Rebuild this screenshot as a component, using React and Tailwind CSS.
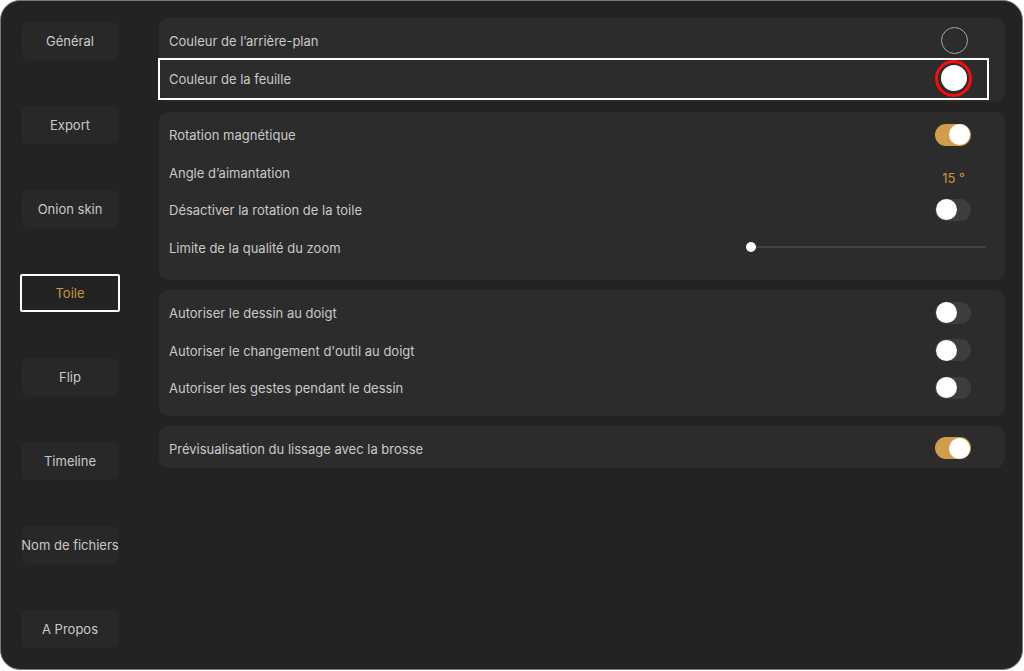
import React from 'react';

const font = { fontFamily: 'Inter, "Noto Sans", sans-serif' };

const navItems = ['Général', 'Export', 'Onion skin', 'Toile', 'Flip', 'Timeline', 'Nom de fichiers', 'A Propos'];

const Toggle = ({ on }) => (
  <div
    className={`w-[36px] h-[22px] rounded-full flex items-center px-[1px] ${
      on ? 'bg-[#d19d4a] justify-end' : 'bg-[#3d3d3f] justify-start'
    }`}
  >
    <div className="w-[21px] h-[21px] rounded-full bg-white" />
  </div>
);

const Row = ({ label, children }) => (
  <div className="h-[37.5px] flex items-center justify-between pl-[10px] pr-[34px]">
    <span className="text-[13px] text-[#c9c9c9] mt-[2px]">{label}</span>
    {children}
  </div>
);

const App = () => {
  return (
    <div className="w-[1024px] h-[671px] bg-white" style={font}>
      <div className="w-[1023px] h-[670px] bg-[#232323] rounded-[20px] border border-[#7a7a7a] flex overflow-hidden">
        {/* Sidebar */}
        <div className="w-[158px] shrink-0 flex flex-col pt-[21px] pl-[20px] gap-[46px]">
          {navItems.map((item) => (
            <div
              key={item}
              className={`h-[38px] flex items-center justify-center text-[13px] pt-[2px] ${
                item === 'Toile'
                  ? 'w-[100px] -ml-[1px] border-2 border-white rounded-[2px] text-[#c8963e] bg-[#232323]'
                  : 'w-[98px] rounded-[6px] bg-[#282828] text-[#c9c9c9]'
              }`}
            >
              {item}
            </div>
          ))}
        </div>

        {/* Content */}
        <div className="flex-1 flex flex-col gap-[10px] pt-[17px] pr-[17px]">
          <div className="bg-[#2c2c2c] rounded-[10px] pt-[4px] pb-[5px]">
            <Row label="Couleur de l’arrière-plan">
              <div className="w-[27px] h-[27px] rounded-full border-[1.5px] border-[#a8a8a8] mr-[3px]" />
            </Row>
            <div className="relative">
              <Row label="Couleur de la feuille">
                <div className="w-[37px] h-[37px] rounded-full border-[3px] border-[#ff0a0a] flex items-center justify-center mr-[-1px]">
                  <div className="w-[26px] h-[26px] rounded-full bg-white" />
                </div>
              </Row>
              <div className="absolute left-[-1px] right-[16px] top-[-2px] bottom-[-3px] border-2 border-white pointer-events-none" />
            </div>
          </div>

          <div className="bg-[#2c2c2c] rounded-[10px] pt-[4px] pb-[14px]">
            <Row label="Rotation magnétique">
              <Toggle on />
            </Row>
            <Row label="Angle d’aimantation">
              <span className="text-[13px] text-[#c8963e] mt-[12px] mr-[6px]">15 °</span>
            </Row>
            <Row label="Désactiver la rotation de la toile">
              <Toggle />
            </Row>
            <div className="h-[37.5px] flex items-center justify-between pl-[10px] pr-[19px]">
              <span className="text-[13px] text-[#c9c9c9] mt-[2px]">Limite de la qualité du zoom</span>
              <div className="w-[240px] relative flex items-center">
                <div className="w-full h-[2px] bg-[#444] rounded-full" />
                <div className="absolute left-0 w-[10px] h-[10px] rounded-full bg-white" />
              </div>
            </div>
          </div>

          <div className="bg-[#2c2c2c] rounded-[10px] pt-[4px] pb-[9px]">
            <Row label="Autoriser le dessin au doigt">
              <Toggle />
            </Row>
            <Row label="Autoriser le changement d'outil au doigt">
              <Toggle />
            </Row>
            <Row label="Autoriser les gestes pendant le dessin">
              <Toggle />
            </Row>
          </div>

          <div className="bg-[#2c2c2c] rounded-[10px] pt-[4px] pb-[1px]">
            <Row label="Prévisualisation du lissage avec la brosse">
              <Toggle on />
            </Row>
          </div>
        </div>
      </div>
    </div>
  );
};

export default App;
